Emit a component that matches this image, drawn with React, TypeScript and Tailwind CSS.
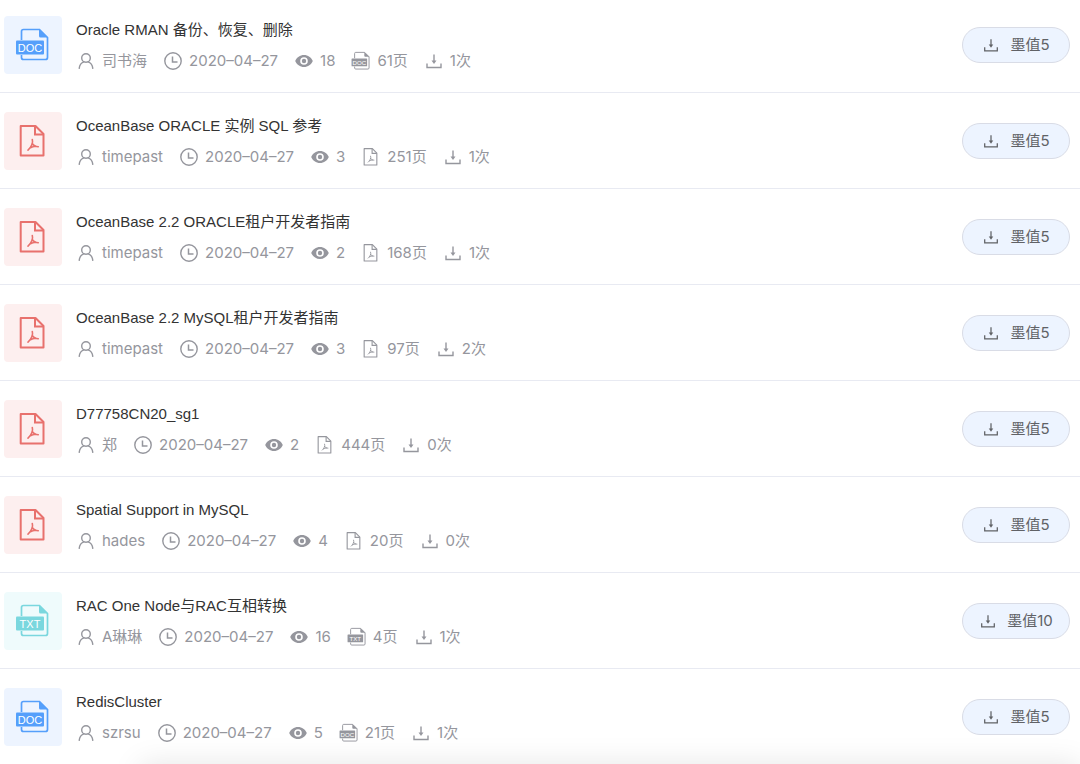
type FileType = "doc" | "pdf" | "txt";

interface DocumentItem {
  title: string;
  type: FileType;
  author: string;
  date: string;
  views: number;
  pages: number;
  downloads: number;
  price: number;
}

const documents: DocumentItem[] = [
  { title: "Oracle RMAN 备份、恢复、删除", type: "doc", author: "司书海", date: "2020–04–27", views: 18, pages: 61, downloads: 1, price: 5 },
  { title: "OceanBase ORACLE 实例 SQL 参考", type: "pdf", author: "timepast", date: "2020–04–27", views: 3, pages: 251, downloads: 1, price: 5 },
  { title: "OceanBase 2.2 ORACLE租户开发者指南", type: "pdf", author: "timepast", date: "2020–04–27", views: 2, pages: 168, downloads: 1, price: 5 },
  { title: "OceanBase 2.2 MySQL租户开发者指南", type: "pdf", author: "timepast", date: "2020–04–27", views: 3, pages: 97, downloads: 2, price: 5 },
  { title: "D77758CN20_sg1", type: "pdf", author: "郑", date: "2020–04–27", views: 2, pages: 444, downloads: 0, price: 5 },
  { title: "Spatial Support in MySQL", type: "pdf", author: "hades", date: "2020–04–27", views: 4, pages: 20, downloads: 0, price: 5 },
  { title: "RAC One Node与RAC互相转换", type: "txt", author: "A琳琳", date: "2020–04–27", views: 16, pages: 4, downloads: 1, price: 10 },
  { title: "RedisCluster", type: "doc", author: "szrsu", date: "2020–04–27", views: 5, pages: 21, downloads: 1, price: 5 },
];

const tileStyles: Record<FileType, string> = {
  doc: "bg-[#edf4ff] text-[#559ffb]",
  pdf: "bg-[#fdefef] text-[#e8716d]",
  txt: "bg-[#effbfc] text-[#7ad7de]",
};

function FileIcon({ type, className }: { type: FileType; className: string }) {
  if (type === "pdf") {
    return (
      <svg viewBox="0 0 36 36" fill="none" stroke="currentColor" className={className} aria-hidden="true">
        <path d="M5.700 3h14.800l8 8v21.500H5.700z" strokeWidth="2" strokeLinejoin="round" />
        <path d="M20 3v8.500h8.500" strokeWidth="2" />
        <path
          d="M17.300 16.500c.5 1.800.4 3.500-.5 5.200c-.8 1.900-1.900 3.800-3.800 5.500M17.300 20.500c1.200 2 3 3.200 6 3.200M14.800 25c2-1 4.200-1.600 6.200-1.700"
          strokeWidth="1.600"
          strokeLinecap="round"
        />
      </svg>
    );
  }

  return (
    <svg viewBox="0 0 36 36" fill="none" className={className} aria-hidden="true">
      <path
        d="M6.500 13V4.500a2 2 0 0 1 2-2H24.500l8 8V30.500a2 2 0 0 1-2 2h-22a2 2 0 0 1-2-2V28"
        stroke="currentColor"
        strokeWidth="1.700"
      />
      <path d="M24 2v7a1.500 1.500 0 0 0 1.500 1.500H33z" fill="currentColor" />
      <rect x="1" y="13.500" width="28" height="14" rx="1" fill="currentColor" />
      <text x="15" y="24.500" textAnchor="middle" fontSize="11" fill="white" fontFamily="Liberation Sans, sans-serif">
        {type.toUpperCase()}
      </text>
    </svg>
  );
}

function UserIcon() {
  return (
    <svg viewBox="0 0 20 20" fill="none" stroke="currentColor" strokeWidth="1.400" strokeLinecap="round" className="size-5" aria-hidden="true">
      <circle cx="10" cy="7" r="4.300" />
      <path d="M3.200 17.300c.4-3.500 2.300-5.600 4.800-6.400M16.800 17.300c-.4-3.500-2.300-5.600-4.800-6.400" />
    </svg>
  );
}

function ClockIcon() {
  return (
    <svg viewBox="0 0 20 20" fill="none" stroke="currentColor" className="size-5" aria-hidden="true">
      <circle cx="10" cy="10" r="8.200" strokeWidth="1.400" />
      <path d="M9.500 5.500v5.500h5" strokeWidth="1.500" />
    </svg>
  );
}

function EyeIcon() {
  return (
    <svg viewBox="0 0 20 20" fill="currentColor" className="size-5" aria-hidden="true">
      <path
        fillRule="evenodd"
        d="M10 4C6 4 2.700 6.500 1.200 10c1.500 3.500 4.800 6 8.800 6s7.300-2.500 8.800-6C17.300 6.500 14 4 10 4zm0 9.800a3.800 3.800 0 1 1 0-7.600a3.800 3.800 0 0 1 0 7.600z"
      />
      <circle cx="10" cy="10" r="2.200" />
    </svg>
  );
}

function DownloadIcon({ className }: { className: string }) {
  return (
    <svg viewBox="0 0 20 20" fill="none" stroke="currentColor" className={className} aria-hidden="true">
      <path d="M3 12.500v4h14v-4" strokeWidth="1.400" />
      <path d="M10 3.500v7" strokeWidth="1.400" />
      <path d="M7.500 9.500h5L10 13z" fill="currentColor" stroke="none" />
    </svg>
  );
}

function DocumentRow({ item }: { item: DocumentItem }) {
  return (
    <li className="flex items-center border-b border-[#e8eaf2] pt-[19px] pb-[18px] pl-1 pr-[10px] first:pt-4 last:border-b-0">
      <div className={`flex size-[58px] shrink-0 items-center justify-center rounded ${tileStyles[item.type]}`}>
        <FileIcon type={item.type} className="size-9" />
      </div>

      <div className="ml-[14px] flex min-w-0 flex-1 flex-col gap-[7px]">
        <a href="#" className="truncate font-['Liberation_Sans','Noto_Sans_CJK_SC',sans-serif] text-[15px] leading-6 text-[#333333]">
          {item.title}
        </a>
        <div className="flex items-center gap-4 text-[15px] leading-6 text-[#95969d]">
          <span className="flex items-center gap-[6px]">
            <UserIcon />
            {item.author}
          </span>
          <span className="flex items-center gap-[6px]">
            <ClockIcon />
            {item.date}
          </span>
          <span className="flex items-center gap-[6px]">
            <EyeIcon />
            {item.views}
          </span>
          <span className="flex items-center gap-[6px]">
            <FileIcon type={item.type} className="size-5" />
            {item.pages}页
          </span>
          <span className="flex items-center gap-[6px]">
            <DownloadIcon className="size-5" />
            {item.downloads}次
          </span>
        </div>
      </div>

      <button
        type="button"
        className="flex h-9 w-[108px] shrink-0 items-center justify-center gap-[10px] rounded-full border border-[#d9dce6] bg-[#edf4ff] text-[15px] text-[#606266]"
      >
        <DownloadIcon className="size-[18px]" />
        墨值{item.price}
      </button>
    </li>
  );
}

export default function App() {
  return (
    <main className="relative min-h-screen overflow-hidden bg-white font-['Inter','Noto_Sans_CJK_SC',sans-serif]">
      <ul>
        {documents.map((item) => (
          <DocumentRow key={item.title} item={item} />
        ))}
      </ul>
      <div className="pointer-events-none absolute top-full right-0 left-[140px] h-10 shadow-[0_0_30px_rgba(0,0,0,0.1)]" />
    </main>
  );
}
